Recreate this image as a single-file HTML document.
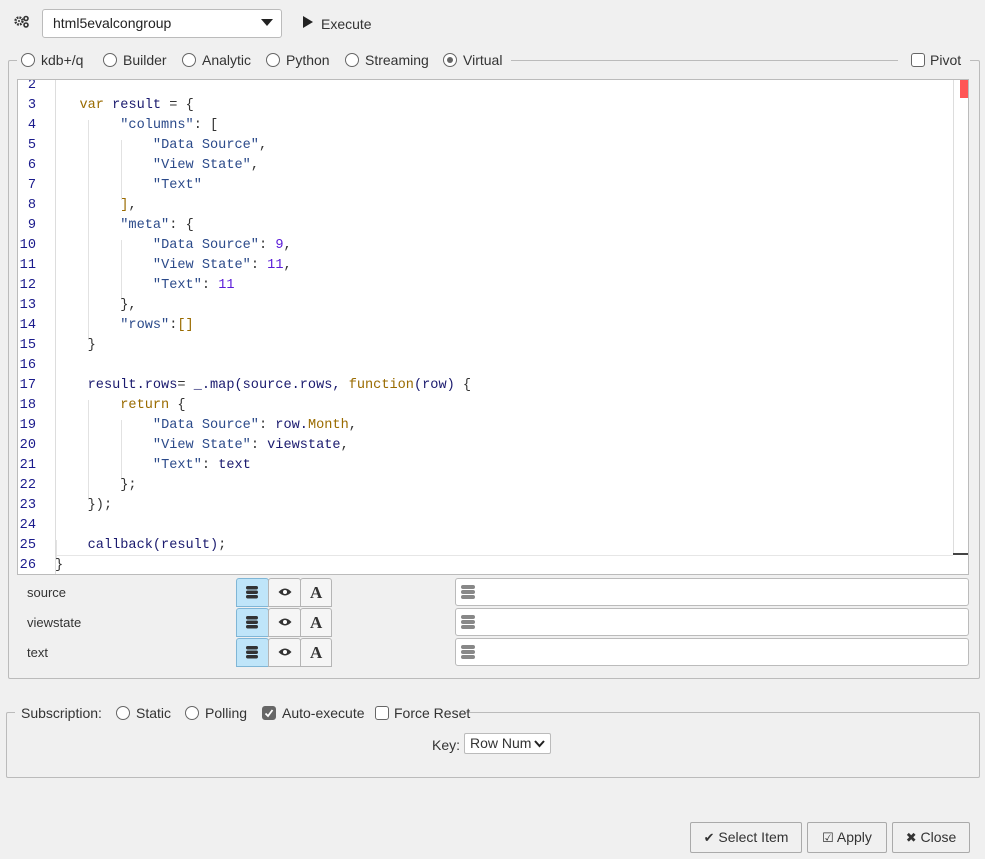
<!DOCTYPE html>
<html><head><meta charset="utf-8"><style>
*{box-sizing:border-box}
body{margin:0;width:985px;height:859px;background:#f0f0f0;font-family:"Liberation Sans",sans-serif;font-size:13px;color:#333;position:relative;overflow:hidden}
.a{position:absolute}
.rad{position:absolute;width:14px;height:14px;border:1px solid #666;border-radius:50%;background:#fff}
.chk{position:absolute;width:14px;height:14px;border:1px solid #666;border-radius:3px;background:#fff}
.code{position:absolute;left:17px;top:79px;width:952px;height:496px;background:#fff;border:1px solid #bbb;overflow:hidden}
.ln{position:absolute;left:0;width:18px;height:20px;font-family:"Liberation Mono",monospace;font-size:13.6px;color:#1a1a8c;text-align:right;line-height:20px}
.cl{position:absolute;left:37px;height:20px;font-family:"Liberation Mono",monospace;font-size:13.6px;line-height:20px;white-space:pre;color:#1a1a6e}
.s{color:#2b4a8a}.k{color:#9a6b00}.n{color:#5a1ad8}.p{color:#333}
.btn{position:absolute;height:29px;border:1px solid #b5b5b5;background:#f5f5f5;border-top-left-radius:3px;border-top-right-radius:3px}
.btn.on{background:#bfe5f9;border-color:#7fb6d6}
.inp{position:absolute;left:455px;width:514px;height:28px;background:#fff;border:1px solid #bbb;border-radius:3px}
.fb{position:absolute;height:31px;border:1px solid #aaa;background:#f0f0f0;border-radius:2px;font-size:14px;line-height:29px;text-align:center;color:#333}
</style></head><body>
<svg class="a" style="left:14px;top:15px" width="16" height="14" viewBox="0 0 16 14"><circle cx="5" cy="6" r="3.5" fill="none" stroke="#333" stroke-width="2.4" stroke-dasharray="1.8 1"/><circle cx="5" cy="6" r="1" fill="#333"/><circle cx="12" cy="3.5" r="2" fill="none" stroke="#333" stroke-width="1.6"/><circle cx="12" cy="10" r="2" fill="none" stroke="#333" stroke-width="1.6"/></svg>
<div class="a" style="left:42px;top:9px;width:240px;height:29px;background:#fff;border:1px solid #bbb;border-radius:3px;font-size:14px;line-height:27px;padding-left:10px;color:#222">html5evalcongroup</div>
<svg class="a" style="left:261px;top:19px" width="12" height="8"><path d="M0 0L12 0L6 7Z" fill="#222"/></svg>
<svg class="a" style="left:303px;top:16px" width="10" height="12"><path d="M0 0L10 6L0 12Z" fill="#222"/></svg>
<div class="a" style="left:321px;top:16px;font-size:14px;color:#333">Execute</div>

<div class="a" style="left:8px;top:60px;width:972px;height:619px;border:1px solid #bbb;border-radius:2px"></div>
<div class="a" style="left:17px;top:52px;width:494px;height:18px;background:#f0f0f0"></div>
<div class="a" style="left:898px;top:52px;width:72px;height:18px;background:#f0f0f0"></div>
<div class="rad" style="left:21px;top:53px"></div><div class="a" style="left:41px;top:52px;font-size:14px">kdb+/q</div>
<div class="rad" style="left:103px;top:53px"></div><div class="a" style="left:123px;top:52px;font-size:14px">Builder</div>
<div class="rad" style="left:182px;top:53px"></div><div class="a" style="left:202px;top:52px;font-size:14px">Analytic</div>
<div class="rad" style="left:266px;top:53px"></div><div class="a" style="left:286px;top:52px;font-size:14px">Python</div>
<div class="rad" style="left:345px;top:53px"></div><div class="a" style="left:365px;top:52px;font-size:14px">Streaming</div>
<div class="rad" style="left:443px;top:53px"></div><div class="a" style="left:447px;top:57px;width:6px;height:6px;border-radius:50%;background:#666"></div><div class="a" style="left:463px;top:52px;font-size:14px">Virtual</div>
<div class="chk" style="left:911px;top:53px"></div><div class="a" style="left:930px;top:52px;font-size:14px">Pivot</div>

<div class="code">
<div class="a" style="left:37px;top:0;width:1px;height:496px;background:#ddd"></div>
<div class="a" style="left:935px;top:0;width:1px;height:475px;background:#ddd"></div>
<div class="a" style="left:942px;top:0;width:9px;height:18px;background:#f55"></div>
<div class="a" style="left:38px;top:475px;width:897px;height:1px;background:#e6e6e6"></div>
<div class="a" style="left:935px;top:473px;width:17px;height:2px;background:#444"></div>
<div class="a" style="left:70px;top:40px;width:1px;height:220px;background:#e2e2e2"></div>
<div class="a" style="left:103px;top:60px;width:1px;height:60px;background:#e2e2e2"></div>
<div class="a" style="left:103px;top:160px;width:1px;height:60px;background:#e2e2e2"></div>
<div class="a" style="left:70px;top:320px;width:1px;height:100px;background:#e2e2e2"></div>
<div class="a" style="left:103px;top:340px;width:1px;height:60px;background:#e2e2e2"></div>
<div class="a" style="left:38px;top:460px;width:1px;height:20px;background:#e2e2e2"></div>

<div class="ln" style="top:-4px">2</div>
<div class="ln" style="top:16px">3</div><div class="cl" style="top:16px">   <span class="k">var</span> result <span class="p">=</span> <span class="p">{</span></div>
<div class="ln" style="top:36px">4</div><div class="cl" style="top:36px">        <span class="s">"columns"</span><span class="p">:</span> <span class="p">[</span></div>
<div class="ln" style="top:56px">5</div><div class="cl" style="top:56px">            <span class="s">"Data Source"</span><span class="p">,</span></div>
<div class="ln" style="top:76px">6</div><div class="cl" style="top:76px">            <span class="s">"View State"</span><span class="p">,</span></div>
<div class="ln" style="top:96px">7</div><div class="cl" style="top:96px">            <span class="s">"Text"</span></div>
<div class="ln" style="top:116px">8</div><div class="cl" style="top:116px">        <span class="k">]</span><span class="p">,</span></div>
<div class="ln" style="top:136px">9</div><div class="cl" style="top:136px">        <span class="s">"meta"</span><span class="p">:</span> <span class="p">{</span></div>
<div class="ln" style="top:156px">10</div><div class="cl" style="top:156px">            <span class="s">"Data Source"</span><span class="p">:</span> <span class="n">9</span><span class="p">,</span></div>
<div class="ln" style="top:176px">11</div><div class="cl" style="top:176px">            <span class="s">"View State"</span><span class="p">:</span> <span class="n">11</span><span class="p">,</span></div>
<div class="ln" style="top:196px">12</div><div class="cl" style="top:196px">            <span class="s">"Text"</span><span class="p">:</span> <span class="n">11</span></div>
<div class="ln" style="top:216px">13</div><div class="cl" style="top:216px">        <span class="p">},</span></div>
<div class="ln" style="top:236px">14</div><div class="cl" style="top:236px">        <span class="s">"rows"</span><span class="p">:</span><span class="k">[]</span></div>
<div class="ln" style="top:256px">15</div><div class="cl" style="top:256px">    <span class="p">}</span></div>
<div class="ln" style="top:276px">16</div>
<div class="ln" style="top:296px">17</div><div class="cl" style="top:296px">    result.rows<span class="p">=</span> _.map(source.rows, <span class="k">function</span>(row) <span class="p">{</span></div>
<div class="ln" style="top:316px">18</div><div class="cl" style="top:316px">        <span class="k">return</span> <span class="p">{</span></div>
<div class="ln" style="top:336px">19</div><div class="cl" style="top:336px">            <span class="s">"Data Source"</span><span class="p">:</span> row.<span class="k">Month</span><span class="p">,</span></div>
<div class="ln" style="top:356px">20</div><div class="cl" style="top:356px">            <span class="s">"View State"</span><span class="p">:</span> viewstate<span class="p">,</span></div>
<div class="ln" style="top:376px">21</div><div class="cl" style="top:376px">            <span class="s">"Text"</span><span class="p">:</span> text</div>
<div class="ln" style="top:396px">22</div><div class="cl" style="top:396px">        <span class="p">};</span></div>
<div class="ln" style="top:416px">23</div><div class="cl" style="top:416px">    <span class="p">});</span></div>
<div class="ln" style="top:436px">24</div>
<div class="ln" style="top:456px">25</div><div class="cl" style="top:456px">    callback(result)<span class="p">;</span></div>
<div class="ln" style="top:476px">26</div><div class="cl" style="top:476px"><span class="p">}</span></div>
</div>

<div class="a" style="left:27px;top:585px">source</div>
<div class="a" style="left:27px;top:615px">viewstate</div>
<div class="a" style="left:27px;top:645px">text</div>
<div class="btn on" style="left:236px;top:578px;width:33px"></div><div class="btn" style="left:268px;top:578px;width:33px"></div><div class="btn" style="left:300px;top:578px;width:32px"></div>
<div class="btn on" style="left:236px;top:608px;width:33px"></div><div class="btn" style="left:268px;top:608px;width:33px"></div><div class="btn" style="left:300px;top:608px;width:32px"></div>
<div class="btn on" style="left:236px;top:638px;width:33px"></div><div class="btn" style="left:268px;top:638px;width:33px"></div><div class="btn" style="left:300px;top:638px;width:32px"></div>
<svg class="a" style="left:246px;top:585px" width="12" height="80"><g fill="#333"><rect x="0" y="1" width="12" height="3.5" rx="1.7"/><rect x="0" y="5.5" width="12" height="3.5" rx="1.7"/><rect x="0" y="10" width="12" height="3.5" rx="1.7"/><rect x="0" y="31" width="12" height="3.5" rx="1.7"/><rect x="0" y="35.5" width="12" height="3.5" rx="1.7"/><rect x="0" y="40" width="12" height="3.5" rx="1.7"/><rect x="0" y="61" width="12" height="3.5" rx="1.7"/><rect x="0" y="65.5" width="12" height="3.5" rx="1.7"/><rect x="0" y="70" width="12" height="3.5" rx="1.7"/></g></svg>
<svg class="a" style="left:278px;top:587px" width="14" height="70"><g><path d="M0.5 5Q7 -2 13.5 5Q7 12 0.5 5Z" fill="#333"/><circle cx="7" cy="5" r="2" fill="#fff"/><path d="M0.5 35Q7 28 13.5 35Q7 42 0.5 35Z" fill="#333"/><circle cx="7" cy="35" r="2" fill="#fff"/><path d="M0.5 65Q7 58 13.5 65Q7 72 0.5 65Z" fill="#333"/><circle cx="7" cy="65" r="2" fill="#fff"/></g></svg>
<div class="a" style="left:310px;top:583px;font-family:'Liberation Serif',serif;font-weight:bold;font-size:17px">A</div>
<div class="a" style="left:310px;top:613px;font-family:'Liberation Serif',serif;font-weight:bold;font-size:17px">A</div>
<div class="a" style="left:310px;top:643px;font-family:'Liberation Serif',serif;font-weight:bold;font-size:17px">A</div>
<div class="inp" style="top:578px"></div><div class="inp" style="top:608px"></div><div class="inp" style="top:638px"></div>
<svg class="a" style="left:461px;top:585px" width="14" height="80"><g fill="#888"><rect x="0" y="0" width="14" height="4" rx="2"/><rect x="0" y="5" width="14" height="4" rx="2"/><rect x="0" y="10" width="14" height="4" rx="2"/><rect x="0" y="30" width="14" height="4" rx="2"/><rect x="0" y="35" width="14" height="4" rx="2"/><rect x="0" y="40" width="14" height="4" rx="2"/><rect x="0" y="60" width="14" height="4" rx="2"/><rect x="0" y="65" width="14" height="4" rx="2"/><rect x="0" y="70" width="14" height="4" rx="2"/></g></svg>

<div class="a" style="left:6px;top:712px;width:974px;height:66px;border:1px solid #bbb;border-radius:2px"></div>
<div class="a" style="left:15px;top:704px;width:450px;height:18px;background:#f0f0f0"></div>
<div class="a" style="left:21px;top:705px;font-size:14px">Subscription:</div>
<div class="rad" style="left:116px;top:706px"></div><div class="a" style="left:136px;top:705px;font-size:14px">Static</div>
<div class="rad" style="left:185px;top:706px"></div><div class="a" style="left:205px;top:705px;font-size:14px">Polling</div>
<div class="chk" style="left:262px;top:706px;background:#666;border-color:#666"></div>
<svg class="a" style="left:264px;top:708px" width="10" height="10"><path d="M1.5 5.5L4 8L8.5 2" fill="none" stroke="#fff" stroke-width="1.8"/></svg>
<div class="a" style="left:282px;top:705px;font-size:14px">Auto-execute</div>
<div class="chk" style="left:375px;top:706px"></div><div class="a" style="left:394px;top:705px;font-size:14px">Force Reset</div>
<div class="a" style="left:432px;top:737px;font-size:14px">Key:</div>
<div class="a" style="left:464px;top:733px;width:87px;height:21px;background:#fff;border:1px solid #bbb;border-radius:2px;font-size:14px;line-height:19px;padding-left:5px">Row Num</div>
<svg class="a" style="left:534px;top:740px" width="11" height="8"><path d="M1 1L5.5 6L10 1" fill="none" stroke="#222" stroke-width="2"/></svg>

<div class="fb" style="left:690px;top:822px;width:112px"><span style="font-size:13px">✔</span> Select Item</div>
<div class="fb" style="left:807px;top:822px;width:80px"><span style="font-size:13px">☑</span> Apply</div>
<div class="fb" style="left:892px;top:822px;width:78px"><span style="font-size:13px">✖</span> Close</div>
</body></html>
